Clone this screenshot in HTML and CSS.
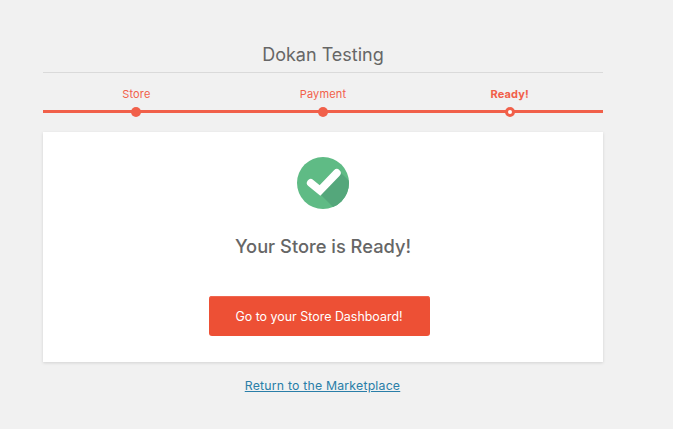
FILE: index.html
```html
<!DOCTYPE html>
<html lang="en">
<head>
<meta charset="utf-8">
<title>Dokan Testing</title>
<link rel="stylesheet" href="styles.css">
</head>
<body>
<main class="wizard">
  <h1 class="title">Dokan Testing</h1>
  <ol class="steps">
    <li class="step">Store</li>
    <li class="step">Payment</li>
    <li class="step step-active">Ready!</li>
  </ol>
  <section class="card">
    <svg class="check" viewBox="0 0 52 52" width="52" height="52" aria-hidden="true">
      <defs><clipPath id="disc"><circle cx="26" cy="26" r="26"/></clipPath></defs>
      <circle cx="26" cy="26" r="26" fill="#5fbb85"/>
      <path clip-path="url(#disc)" d="M23 37 L41 13 L72 43 L47 61 Z" fill="#54a77b"/>
      <path d="M13.8 26 L23 33.5 L39.8 16" fill="none" stroke="#fff" stroke-width="7.8" stroke-linecap="round" stroke-linejoin="miter"/>
    </svg>
    <h2 class="ready">Your Store is Ready!</h2>
    <a class="button" href="#">Go to your Store Dashboard!</a>
  </section>
  <a class="return" href="#">Return to the Marketplace</a>
</main>
</body>
</html>
```
FILE: styles.css
```css
*, *::after { box-sizing: border-box; }
html, body { margin: 0; padding: 0; }
body {
  background: #f1f1f1;
  font-family: Inter, "Liberation Sans", sans-serif;
  color: #666;
  height: 429px;
  overflow: hidden;
}
.wizard {
  width: 560px;
  margin-left: 43px;
  padding-top: 43px;
  display: flex;
  flex-direction: column;
}
.title {
  margin: 0;
  height: 30px;
  border-bottom: 1px solid #dadada;
  text-align: center;
  font-size: 18px;
  line-height: 24px;
  font-weight: 400;
  color: #666;
}
.steps {
  list-style: none;
  margin: 0;
  padding: 14px 0 0;
  display: grid;
  grid-template-columns: repeat(3, 1fr);
  border-bottom: 3px solid #f1604a;
  height: 40px;
}
.step {
  position: relative;
  text-align: center;
  font-size: 11px;
  line-height: 14px;
  letter-spacing: .15px;
  color: #f1604a;
}
.step::after {
  content: "";
  position: absolute;
  left: 50%;
  bottom: -6.5px;
  width: 10px;
  height: 10px;
  margin-left: -5px;
  border-radius: 50%;
  background: #f1604a;
}
.step-active { font-weight: 700; }
.step-active::after {
  background: #fff;
  border: 3px solid #f1604a;
}
.card {
  margin-top: 19px;
  height: 230px;
  background: #fff;
  box-shadow: 0 1px 3px rgba(0, 0, 0, .13);
  display: flex;
  flex-direction: column;
  align-items: center;
  padding-top: 25px;
}
.check { display: block; }
.ready {
  margin: 25px 0 0;
  font-size: 18.3px;
  line-height: 24px;
  font-weight: 500;
  color: #666;
}
.button {
  margin: 38px 8px 0 0;
  width: 221px;
  height: 40px;
  display: flex;
  align-items: center;
  justify-content: center;
  background: #ed5035;
  border-radius: 3px;
  box-shadow: inset 0 1px 0 #f0664f;
  color: #fff;
  font-size: 12.45px;
  text-decoration: none;
}
.return {
  margin: 16px 1px 0 0;
  font-size: 12.3px;
  line-height: 16px;
  letter-spacing: .2px;
  color: #2a7ea8;
  align-self: center;
}
```
